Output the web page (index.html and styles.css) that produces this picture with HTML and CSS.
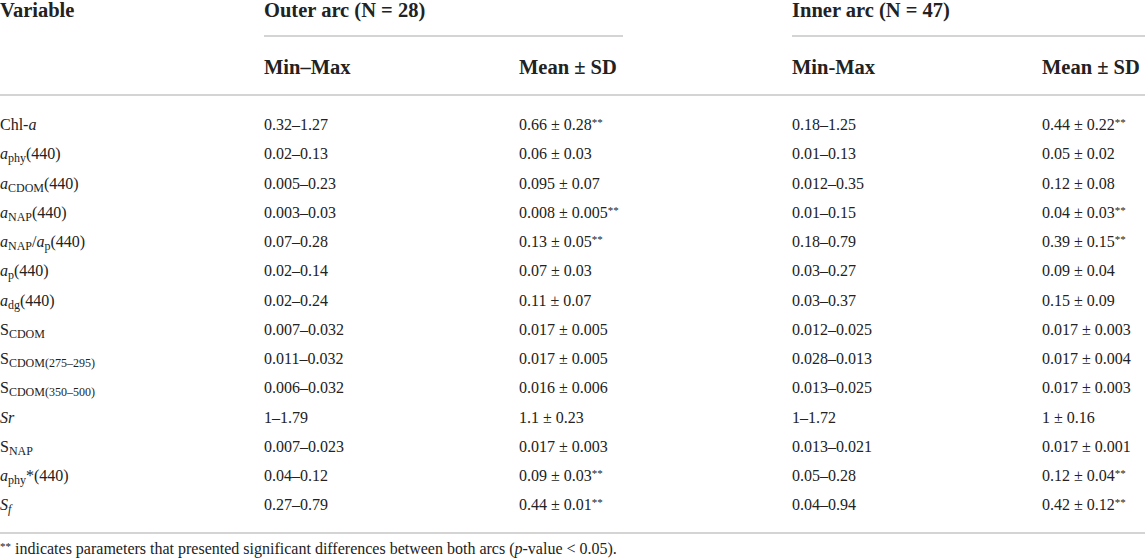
FILE: index.html
```html
<!DOCTYPE html>
<html lang="en">
<head>
  <meta charset="UTF-8">
  <meta name="viewport" content="width=device-width, initial-scale=1.0">
  <title>Optical properties by arc</title>
  <link rel="stylesheet" href="styles.css">
</head>
<body>

<table class="data-table">
  <colgroup>
    <col class="col-var">
    <col class="col-outer-range">
    <col class="col-outer-mean">
    <col class="col-inner-range">
    <col class="col-inner-mean">
  </colgroup>
  <thead>
    <tr class="head-group">
      <th rowspan="2" class="head-var">Variable</th>
      <th colspan="2"><div class="group-rule group-outer">Outer arc (N = 28)</div></th>
      <th colspan="2"><div class="group-rule">Inner arc (N = 47)</div></th>
    </tr>
    <tr class="head-sub">
      <th>Min–Max</th>
      <th>Mean ± SD</th>
      <th>Min-Max</th>
      <th>Mean ± SD</th>
    </tr>
  </thead>
  <tbody>
    <tr>
      <td>Chl-<i>a</i></td>
      <td>0.32–1.27</td>
      <td>0.66 ± 0.28<sup>**</sup></td>
      <td>0.18–1.25</td>
      <td>0.44 ± 0.22<sup>**</sup></td>
    </tr>
    <tr>
      <td><i>a</i><sub>phy</sub>(440)</td>
      <td>0.02–0.13</td>
      <td>0.06 ± 0.03</td>
      <td>0.01–0.13</td>
      <td>0.05 ± 0.02</td>
    </tr>
    <tr>
      <td><i>a</i><sub>CDOM</sub>(440)</td>
      <td>0.005–0.23</td>
      <td>0.095 ± 0.07</td>
      <td>0.012–0.35</td>
      <td>0.12 ± 0.08</td>
    </tr>
    <tr>
      <td><i>a</i><sub>NAP</sub>(440)</td>
      <td>0.003–0.03</td>
      <td>0.008 ± 0.005<sup>**</sup></td>
      <td>0.01–0.15</td>
      <td>0.04 ± 0.03<sup>**</sup></td>
    </tr>
    <tr>
      <td><i>a</i><sub>NAP</sub>/<i>a</i><sub>p</sub>(440)</td>
      <td>0.07–0.28</td>
      <td>0.13 ± 0.05<sup>**</sup></td>
      <td>0.18–0.79</td>
      <td>0.39 ± 0.15<sup>**</sup></td>
    </tr>
    <tr>
      <td><i>a</i><sub>p</sub>(440)</td>
      <td>0.02–0.14</td>
      <td>0.07 ± 0.03</td>
      <td>0.03–0.27</td>
      <td>0.09 ± 0.04</td>
    </tr>
    <tr>
      <td><i>a</i><sub>dg</sub>(440)</td>
      <td>0.02–0.24</td>
      <td>0.11 ± 0.07</td>
      <td>0.03–0.37</td>
      <td>0.15 ± 0.09</td>
    </tr>
    <tr>
      <td>S<sub>CDOM</sub></td>
      <td>0.007–0.032</td>
      <td>0.017 ± 0.005</td>
      <td>0.012–0.025</td>
      <td>0.017 ± 0.003</td>
    </tr>
    <tr>
      <td>S<sub>CDOM(275–295)</sub></td>
      <td>0.011–0.032</td>
      <td>0.017 ± 0.005</td>
      <td>0.028–0.013</td>
      <td>0.017 ± 0.004</td>
    </tr>
    <tr>
      <td>S<sub>CDOM(350–500)</sub></td>
      <td>0.006–0.032</td>
      <td>0.016 ± 0.006</td>
      <td>0.013–0.025</td>
      <td>0.017 ± 0.003</td>
    </tr>
    <tr>
      <td><i>Sr</i></td>
      <td>1–1.79</td>
      <td>1.1 ± 0.23</td>
      <td>1–1.72</td>
      <td>1 ± 0.16</td>
    </tr>
    <tr>
      <td>S<sub>NAP</sub></td>
      <td>0.007–0.023</td>
      <td>0.017 ± 0.003</td>
      <td>0.013–0.021</td>
      <td>0.017 ± 0.001</td>
    </tr>
    <tr>
      <td><i>a</i><sub>phy</sub>*(440)</td>
      <td>0.04–0.12</td>
      <td>0.09 ± 0.03<sup>**</sup></td>
      <td>0.05–0.28</td>
      <td>0.12 ± 0.04<sup>**</sup></td>
    </tr>
    <tr>
      <td><i>S<sub>f</sub></i></td>
      <td>0.27–0.79</td>
      <td>0.44 ± 0.01<sup>**</sup></td>
      <td>0.04–0.94</td>
      <td>0.42 ± 0.12<sup>**</sup></td>
    </tr>
  </tbody>
</table>

<p class="table-note"><sup>**</sup> indicates parameters that presented significant differences between both arcs (<i>p</i>-value &lt; 0.05).</p>

</body>
</html>
```

FILE: styles.css
```css
body {
  margin: 0;
  padding: 0;
  background-color: #fff;
  color: #222;
  font-family: "Liberation Serif", "Times New Roman", serif;
}

.data-table {
  width: 1145px;
  table-layout: fixed;
  border-collapse: collapse;
  border-spacing: 0;
}

.col-var { width: 264px; }
.col-outer-range { width: 255px; }
.col-outer-mean { width: 273px; }
.col-inner-range { width: 250px; }
.col-inner-mean { width: 103px; }

/* header */
.data-table th {
  padding: 0;
  text-align: left;
  vertical-align: top;
  font-size: 20.5px;
  font-weight: bold;
  line-height: 20px;
  white-space: nowrap;
}

.head-group th {
  padding-top: 0;
}

.group-rule {
  padding-bottom: 15px;
  border-bottom: 2px solid #d4d4d4;
}

.group-outer {
  width: 359px;
}

.head-sub th {
  padding-top: 20px;
  padding-bottom: 17px;
  border-bottom: 2px solid #d4d4d4;
}

.head-var {
  border-bottom: 2px solid #d4d4d4;
}

/* body rows */
.data-table td {
  padding: 0;
  font-size: 16px;
  line-height: 29.25px;
  white-space: nowrap;
  vertical-align: middle;
}

.data-table tbody tr:first-child td {
  padding-top: 14px;
}

.data-table tbody tr:last-child td {
  padding-bottom: 12px;
  border-bottom: 2px solid #d4d4d4;
}

sub {
  font-size: 12px;
  line-height: 0;
  vertical-align: -3px;
}

sup {
  font-size: 11px;
  line-height: 0;
  vertical-align: 4px;
}

.table-note {
  margin: 0;
  padding-top: 5px;
  font-size: 16px;
  line-height: 20px;
  white-space: nowrap;
}
```
